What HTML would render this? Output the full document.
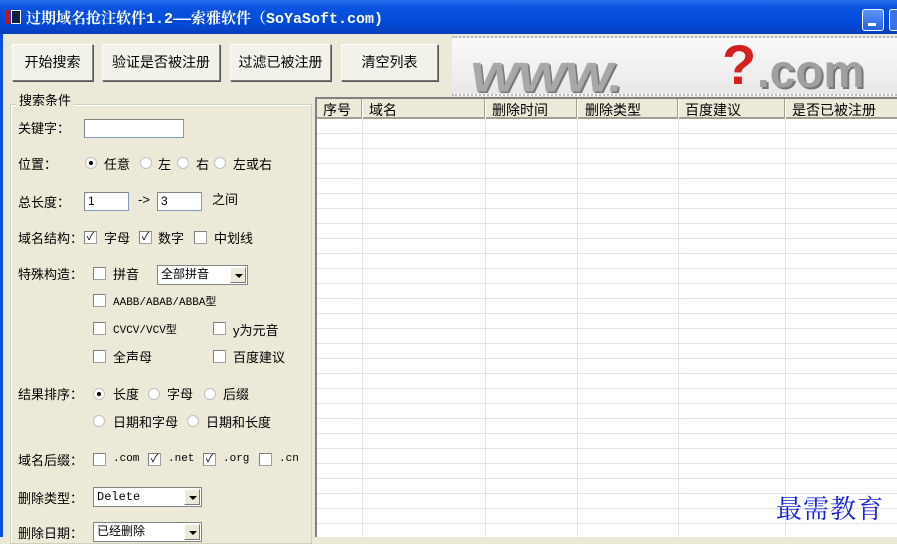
<!DOCTYPE html><html><head><meta charset="utf-8"><style>
*{margin:0;padding:0;box-sizing:border-box}
body{width:897px;height:537px;overflow:hidden;background:#ECE9D8;position:relative;font-family:"Liberation Sans","SimSun","Noto Sans CJK SC",sans-serif;font-size:13px;color:#000}
.a{position:absolute;white-space:nowrap}
.title{left:0;top:0;width:897px;height:34px;background:linear-gradient(#2a6ff0 0%,#0a54e0 20%,#0349d8 70%,#0a3fb8 100%)}
.btn{position:absolute;top:44px;height:37px;background:#f3f2ea;border:1px solid #fff;border-right-color:#888;border-bottom-color:#777;box-shadow:1px 1px 0 #555;text-align:center;line-height:35px;font-size:14px}
.tb{background:#fff;border:1px solid #7f9db9;border-top-color:#848484;border-left-color:#848484;height:19px;font-size:12px;line-height:17px;padding-left:3px}
.cb{width:13px;height:13px;background:#fff;border:1px solid #a0a0a0;border-top-color:#808080;border-left-color:#808080;font-size:11px;line-height:11px;text-align:center}
.rd{width:12px;height:12px;border-radius:50%;background:#fff;border:1px solid #c0c0c0}
.rd.on::after{content:"";position:absolute;left:3px;top:3px;width:4px;height:4px;border-radius:50%;background:#000}
.dd{background:#fff;border:1px solid #848484;height:20px;font-size:12px;line-height:18px;padding-left:3px;font-family:"Liberation Mono","SimSun","Noto Sans CJK SC",monospace}
.dd i{position:absolute;right:1px;top:1px;width:16px;height:16px;background:#ECE9D8;border:1px solid #fff;border-right-color:#777;border-bottom-color:#777}
.dd i::after{content:"";position:absolute;left:4px;top:6px;border:4px solid transparent;border-top:4px solid #000;border-bottom:0}
.m{font-family:"Liberation Mono",monospace;font-size:11px}
</style></head><body>
<div class="a title"></div>
<div class="a" style="left:0;top:34px;width:3px;height:503px;background:#0a4fd8"></div>
<div class="a" style="left:5px;top:10px;width:5px;height:14px;background:#d01010"></div>
<div class="a" style="left:11px;top:10px;width:10px;height:14px;background:#102040;border:1px solid #fff"></div>
<div class="a" style="left:26px;top:7px;color:#fff;font-size:15px;font-weight:bold;font-family:'Liberation Mono','Noto Serif CJK SC',monospace">过期域名抢注软件1.2——索雅软件（SoYaSoft.com)</div>
<div class="a" style="left:862px;top:9px;width:22px;height:22px;border:1px solid #fff;border-radius:3px;background:linear-gradient(#5b95f8,#2860e0)"><div class="a" style="left:5px;top:13px;width:8px;height:3px;background:#fff"></div></div>
<div class="a" style="left:889px;top:9px;width:10px;height:22px;border:1px solid #fff;border-radius:3px;background:#3a70e8"></div>

<div class="btn" style="left:12px;width:81px">开始搜索</div>
<div class="btn" style="left:102px;width:118px">验证是否被注册</div>
<div class="btn" style="left:230px;width:101px">过滤已被注册</div>
<div class="btn" style="left:341px;width:97px">清空列表</div>

<div class="a" style="left:452px;top:36px;width:445px;height:60px;background:linear-gradient(#fafafa,#e8e8e8);overflow:hidden;border-top:2px dotted #bbb;border-bottom:2px dotted #bbb">
<div class="a" style="left:14px;top:4px;font:900 52px 'Liberation Sans',sans-serif;color:#a8a8a8;letter-spacing:-2px;transform:scaleY(0.8) skewX(-8deg);transform-origin:bottom;text-shadow:2px 2px 0 #777">WWW.</div>
<div class="a" style="left:270px;top:-6px;font:bold 56px 'Liberation Sans',sans-serif;color:#d42020">?</div>
<div class="a" style="left:305px;top:6px;font:900 46px 'Liberation Sans',sans-serif;color:#a0a0a0;text-shadow:2px 2px 0 #777">.com</div>
</div>

<div class="a" style="left:10px;top:104px;width:302px;height:440px;border:1px solid #d0d0bf;box-shadow:inset 1px 1px 0 #fff"></div>
<div class="a" style="left:16px;top:90px;background:#ECE9D8;padding:0 3px;font-size:13px">搜索条件</div>

<div class="a" style="left:18px;top:118px">关键字：</div>
<div class="a tb" style="left:84px;top:119px;width:100px"></div>
<div class="a" style="left:18px;top:154px">位置：</div>
<div class="a rd on" style="left:85px;top:157px"></div><div class="a" style="left:104px;top:154px">任意</div>
<div class="a rd" style="left:140px;top:157px"></div><div class="a" style="left:158px;top:154px">左</div>
<div class="a rd" style="left:177px;top:157px"></div><div class="a" style="left:196px;top:154px">右</div>
<div class="a rd" style="left:214px;top:157px"></div><div class="a" style="left:233px;top:154px">左或右</div>
<div class="a" style="left:18px;top:192px">总长度：</div>
<div class="a tb" style="left:84px;top:192px;width:45px">1</div>
<div class="a" style="left:138px;top:192px">-&gt;</div>
<div class="a tb" style="left:157px;top:192px;width:45px">3</div>
<div class="a" style="left:212px;top:189px">之间</div>
<div class="a" style="left:18px;top:228px">域名结构：</div>
<div class="a cb" style="left:84px;top:231px">✓</div><div class="a" style="left:104px;top:228px">字母</div>
<div class="a cb" style="left:139px;top:231px">✓</div><div class="a" style="left:158px;top:228px">数字</div>
<div class="a cb" style="left:194px;top:231px"></div><div class="a" style="left:214px;top:228px">中划线</div>
<div class="a" style="left:18px;top:264px">特殊构造：</div>
<div class="a cb" style="left:93px;top:267px"></div><div class="a" style="left:113px;top:264px">拼音</div>
<div class="a dd" style="left:157px;top:265px;width:91px">全部拼音<i></i></div>
<div class="a cb" style="left:93px;top:294px"></div><div class="a m" style="left:113px;top:293px">AABB/ABAB/ABBA型</div>
<div class="a cb" style="left:93px;top:322px"></div><div class="a m" style="left:113px;top:321px">CVCV/VCV型</div>
<div class="a cb" style="left:213px;top:322px"></div><div class="a" style="left:233px;top:320px">y为元音</div>
<div class="a cb" style="left:93px;top:350px"></div><div class="a" style="left:113px;top:347px">全声母</div>
<div class="a cb" style="left:213px;top:350px"></div><div class="a" style="left:233px;top:347px">百度建议</div>
<div class="a" style="left:18px;top:384px">结果排序：</div>
<div class="a rd on" style="left:93px;top:388px"></div><div class="a" style="left:113px;top:384px">长度</div>
<div class="a rd" style="left:148px;top:388px"></div><div class="a" style="left:167px;top:384px">字母</div>
<div class="a rd" style="left:204px;top:388px"></div><div class="a" style="left:223px;top:384px">后缀</div>
<div class="a rd" style="left:93px;top:415px"></div><div class="a" style="left:113px;top:412px">日期和字母</div>
<div class="a rd" style="left:187px;top:415px"></div><div class="a" style="left:206px;top:412px">日期和长度</div>
<div class="a" style="left:18px;top:450px">域名后缀：</div>
<div class="a cb" style="left:93px;top:453px"></div><div class="a m" style="left:113px;top:453px">.com</div>
<div class="a cb" style="left:148px;top:453px">✓</div><div class="a m" style="left:168px;top:453px">.net</div>
<div class="a cb" style="left:203px;top:453px">✓</div><div class="a m" style="left:223px;top:453px">.org</div>
<div class="a cb" style="left:259px;top:453px"></div><div class="a m" style="left:279px;top:453px">.cn</div>
<div class="a" style="left:18px;top:488px">删除类型：</div>
<div class="a dd" style="left:93px;top:487px;width:109px">Delete<i></i></div>
<div class="a" style="left:18px;top:523px">删除日期：</div>
<div class="a dd" style="left:93px;top:522px;width:109px">已经删除<i></i></div>

<div class="a" style="left:315px;top:97px;width:582px;height:440px;background:#fff;border-left:2px solid #808080;border-top:2px solid #808080;
background-image:repeating-linear-gradient(to bottom,transparent 0 14px,#e4e4dc 14px 15px);background-position:0 5px"></div>
<div class="a" style="left:317px;top:99px;width:580px;height:20px;background:#ECE9D8;border-bottom:2px solid #a0a090"></div>
<div class="a" style="left:317px;top:99px;width:580px;height:440px">
<div class="a" style="left:45px;top:0;width:1px;height:440px;background:#e4e4dc"></div>
<div class="a" style="left:168px;top:0;width:1px;height:440px;background:#e4e4dc"></div>
<div class="a" style="left:260px;top:0;width:1px;height:440px;background:#e4e4dc"></div>
<div class="a" style="left:361px;top:0;width:1px;height:440px;background:#e4e4dc"></div>
<div class="a" style="left:468px;top:0;width:1px;height:440px;background:#e4e4dc"></div>
<div class="a" style="left:6px;top:1px;font-size:14px">序号</div>
<div class="a" style="left:52px;top:1px;font-size:14px">域名</div>
<div class="a" style="left:175px;top:1px;font-size:14px">删除时间</div>
<div class="a" style="left:268px;top:1px;font-size:14px">删除类型</div>
<div class="a" style="left:368px;top:1px;font-size:14px">百度建议</div>
<div class="a" style="left:475px;top:1px;font-size:14px">是否已被注册</div>
<div class="a" style="left:44px;top:0;width:2px;height:20px;border-left:1px solid #a0a090;border-right:1px solid #fff"></div>
<div class="a" style="left:167px;top:0;width:2px;height:20px;border-left:1px solid #a0a090;border-right:1px solid #fff"></div>
<div class="a" style="left:259px;top:0;width:2px;height:20px;border-left:1px solid #a0a090;border-right:1px solid #fff"></div>
<div class="a" style="left:360px;top:0;width:2px;height:20px;border-left:1px solid #a0a090;border-right:1px solid #fff"></div>
<div class="a" style="left:467px;top:0;width:2px;height:20px;border-left:1px solid #a0a090;border-right:1px solid #fff"></div>
</div>
<div class="a" style="left:776px;top:489px;font-size:26px;color:#1520e0;font-family:'Noto Serif CJK SC',serif;letter-spacing:1px">最需教育</div>
</body></html>
